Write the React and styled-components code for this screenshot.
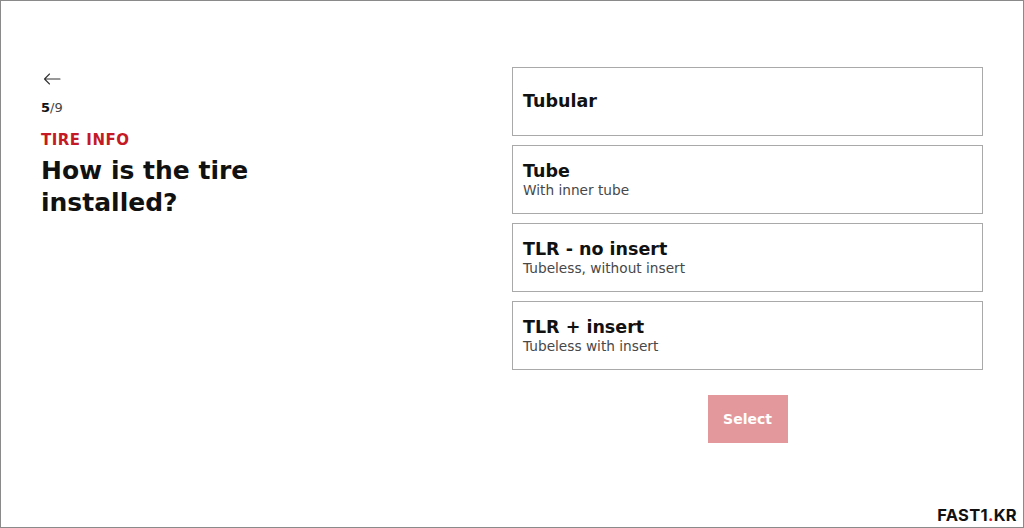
import React from "react";
import styled, { createGlobalStyle } from "styled-components";

const Global = createGlobalStyle`
  html, body { margin: 0; padding: 0; background: #fff; }
  body { font-family: "DejaVu Sans", Verdana, sans-serif; color: #111; }
  * { box-sizing: border-box; }
`;

const Frame = styled.div`
  position: relative;
  width: 1024px;
  height: 528px;
  border: 1px solid #8a8a8a;
  background: #fff;
  overflow: hidden;
`;

const Layout = styled.main`
  display: grid;
  grid-template-columns: 1fr 1fr;
  padding: 66px 40px 0 40px;
`;

const Intro = styled.section`
  display: flex;
  flex-direction: column;
  align-items: flex-start;
  padding-top: 3px;
`;

const BackButton = styled.button`
  display: flex;
  align-items: center;
  justify-content: center;
  width: 20px;
  height: 18px;
  padding: 0;
  margin-left: 1px;
  border: none;
  background: none;
  color: #333;
  cursor: pointer;
`;

const Step = styled.div`
  margin-top: 12px;
  font-size: 13px;
  line-height: 16px;
  color: #444;
  b { color: #111; font-weight: 700; }
`;

const Eyebrow = styled.div`
  margin-top: 15px;
  font-size: 15px;
  line-height: 18px;
  font-weight: 700;
  letter-spacing: 0.5px;
  color: #c41a26;
`;

const Heading = styled.h1`
  margin: 6px 0 0;
  font-size: 25px;
  line-height: 32px;
  font-weight: 700;
  color: #111;
  max-width: 260px;
`;

const Options = styled.section`
  display: flex;
  flex-direction: column;
  gap: 9px;
`;

const OptionCard = styled.button`
  display: flex;
  flex-direction: column;
  justify-content: center;
  align-items: flex-start;
  height: 69px;
  padding: 0 10px;
  border: 1px solid #a9a9a9;
  background: #fff;
  text-align: left;
  font-family: inherit;
  cursor: pointer;
`;

const OptionTitle = styled.span`
  font-size: 17.5px;
  line-height: 21px;
  font-weight: 700;
  color: #111;
`;

const OptionSub = styled.span`
  font-size: 13.7px;
  line-height: 17px;
  color: #484848;
`;

const Actions = styled.div`
  display: flex;
  justify-content: center;
  margin-top: 25px;
`;

const SelectButton = styled.button`
  width: 80px;
  height: 48px;
  border: none;
  background: #e3999c;
  color: #fff;
  font-family: inherit;
  font-size: 14px;
  font-weight: 700;
  cursor: pointer;
`;

const Watermark = styled.div`
  position: absolute;
  right: 6px;
  bottom: 2px;
  font-family: Inter, "Liberation Sans", sans-serif;
  font-size: 16.5px;
  font-weight: 700;
  color: #111;
  letter-spacing: 0.3px;
  span { color: #d4202a; }
`;

const options = [
  { title: "Tubular" },
  { title: "Tube", sub: "With inner tube" },
  { title: "TLR - no insert", sub: "Tubeless, without insert" },
  { title: "TLR + insert", sub: "Tubeless with insert" },
];

export default function App() {
  return (
    <Frame>
      <Global />
      <Layout>
        <Intro>
          <BackButton aria-label="Back">
            <svg width="18" height="12" viewBox="0 0 18 12" fill="none" stroke="currentColor" strokeWidth="1.1" strokeLinecap="round" strokeLinejoin="round">
              <path d="M17 6H1.5M6.5 1L1.5 6l5 5" />
            </svg>
          </BackButton>
          <Step><b>5</b>/9</Step>
          <Eyebrow>TIRE INFO</Eyebrow>
          <Heading>How is the tire installed?</Heading>
        </Intro>
        <div>
          <Options>
            {options.map((o) => (
              <OptionCard key={o.title}>
                <OptionTitle>{o.title}</OptionTitle>
                {o.sub && <OptionSub>{o.sub}</OptionSub>}
              </OptionCard>
            ))}
          </Options>
          <Actions>
            <SelectButton>Select</SelectButton>
          </Actions>
        </div>
      </Layout>
      <Watermark>FAST1<span>.</span>KR</Watermark>
    </Frame>
  );
}
